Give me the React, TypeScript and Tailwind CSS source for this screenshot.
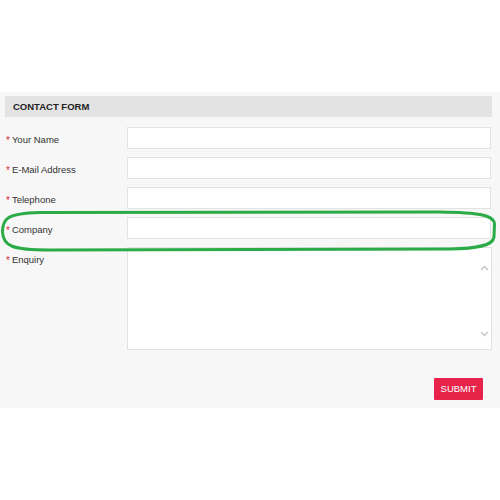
const rows = ['Your Name', 'E-Mail Address', 'Telephone', 'Company'];

function Label({ text }: { text: string }) {
  return (
    <div className="w-[127px] h-[22px] flex items-center pl-[6px] pt-[4px] text-[9.5px] text-[#333]">
      <span className="text-[#e0283f] text-[10px] leading-none mr-[2px] mt-[2px]">*</span>
      <span>{text}</span>
    </div>
  );
}

export default function App() {
  return (
    <div
      className="relative w-[500px] h-[500px] bg-white overflow-hidden"
      style={{ fontFamily: '"Liberation Sans", Arial, sans-serif' }}
    >
      <div className="mt-[92px] h-[316px] bg-[#f7f7f7] pt-[4px]">
        <div className="ml-[5px] w-[487px] h-[21px] bg-[#e3e3e3] flex items-center pl-[8px] pt-[1px] text-[9.5px] font-bold text-[#222]">
          CONTACT FORM
        </div>

        <div className="mt-[10px] flex flex-col gap-[8px]">
          {rows.map(r => (
            <div key={r} className="flex">
              <Label text={r} />
              <input className="w-[364px] h-[22px] bg-white border border-[#e2e2e2] outline-none" />
            </div>
          ))}
          <div className="flex">
            <Label text="Enquiry" />
            <div className="relative w-[365px] h-[103px] bg-white border border-[#e2e2e2]">
              <textarea className="w-full h-full resize-none overflow-hidden outline-none bg-transparent" />
              <svg className="absolute right-[2px] top-[17px]" width="9" height="6" viewBox="0 0 9 6" fill="none">
                <path d="M1 5l3.5-3.5L8 5" stroke="#c4c4c4" strokeWidth="1.3" />
              </svg>
              <svg className="absolute right-[2px] bottom-[12px]" width="9" height="6" viewBox="0 0 9 6" fill="none">
                <path d="M1 1l3.5 3.5L8 1" stroke="#c4c4c4" strokeWidth="1.3" />
              </svg>
            </div>
          </div>
        </div>

        <div className="flex justify-end pr-[17px] mt-[28px]">
          <button className="w-[49px] h-[22px] bg-[#e8234a] text-white text-[9.5px] rounded-[1px]">
            SUBMIT
          </button>
        </div>
      </div>

      {/* hand-drawn highlight */}
      <svg className="absolute left-0 top-0 pointer-events-none" width="500" height="500" viewBox="0 0 500 500" fill="none">
        <path
          d="M40 212.5 L440 212 C478 212.5 494 215 494.5 224 L494 237 C493 246 476 248.5 450 249 L50 250 C12 250 3 246 2.5 232 C2.5 219 6 213.5 40 212.5 Z"
          stroke="#2bab47"
          strokeWidth="3"
          strokeLinejoin="round"
        />
      </svg>
    </div>
  );
}
